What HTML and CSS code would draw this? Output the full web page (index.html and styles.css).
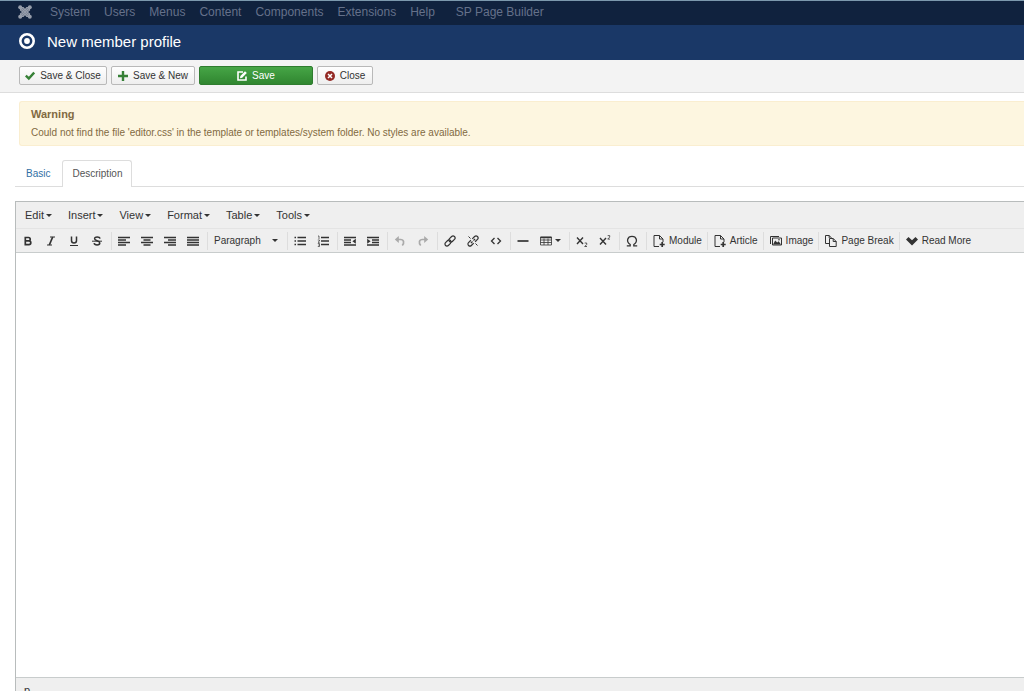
FILE: index.html
```html
<!DOCTYPE html>
<html lang="en">
<head>
<meta charset="utf-8">
<title>New member profile</title>
<link rel="stylesheet" href="styles.css">
</head>
<body>
<div class="page">
<nav class="nav">
  <svg class="brand" viewBox="0 0 14 14"><g fill="none" stroke="#969daa" stroke-width="1.900"><path d="M2.800 2.800 11.200 11.200M11.200 2.800 2.800 11.200"/><path d="M2.600 3v2.200L5 7 2.600 8.800V11M11.400 3v2.200L9 7l2.400 1.800V11M3 2.600h2.200L7 5l1.800-2.400H11M3 11.400h2.200L7 9l1.800 2.400H11" stroke-width="1.400"/></g><g fill="#969daa"><circle cx="2.200" cy="2.200" r="2"/><circle cx="11.800" cy="2.200" r="2"/><circle cx="2.200" cy="11.800" r="2"/><circle cx="11.800" cy="11.800" r="2"/></g></svg>
  <a href="#">System</a><a href="#">Users</a><a href="#">Menus</a><a href="#">Content</a><a href="#">Components</a><a href="#">Extensions</a><a href="#">Help</a><a href="#" class="extra">SP Page Builder</a>
</nav>
<header class="header">
  <svg class="target" viewBox="0 0 16 16"><circle cx="8" cy="8" r="6.700" fill="none" stroke="#fff" stroke-width="2.600"/><circle cx="8" cy="8" r="2.900" fill="#fff"/></svg>
  <h1>New member profile</h1>
</header>
<div class="actions">
  <button class="btn save-close"><svg viewBox="0 0 10 10"><path d="M.8 4.700 3.800 7.500 9.200 1.500" fill="none" stroke="#378137" stroke-width="2.400"/></svg>Save &amp; Close</button>
  <button class="btn save-new"><svg viewBox="0 0 10 10"><path d="M5 0v10M0 5h10" stroke="#378137" stroke-width="2.400"/></svg>Save &amp; New</button>
  <button class="btn primary"><svg viewBox="0 0 10 10"><path d="M6 1H1v8h8V5.500" fill="none" stroke="#fff" stroke-width="1.600"/><path d="M3 7.200 3.400 5 8 .3 9.800 2 5.200 6.700z" fill="#fff"/></svg>Save</button>
  <button class="btn close"><svg viewBox="0 0 10 10"><circle cx="5" cy="5" r="5" fill="#942a25"/><path d="m3 3 4 4M7 3 3 7" stroke="#fff" stroke-width="1.500"/></svg>Close</button>
</div>
<main class="main">
  <section class="alert">
    <h2>Warning</h2>
    <p>Could not find the file 'editor.css' in the template or templates/system folder. No styles are available.</p>
  </section>
  <div class="tabs"><a href="#">Basic</a><a href="#" class="active">Description</a></div>
  <section class="editor">
    <div class="menubar">
      <button>Edit<i class="caret"></i></button><button>Insert<i class="caret"></i></button><button>View<i class="caret"></i></button><button>Format<i class="caret"></i></button><button>Table<i class="caret"></i></button><button>Tools<i class="caret"></i></button>
    </div>
    <div class="toolbar">
      <div class="group">
        <button aria-label="Bold"><svg viewBox="0 0 12 12"><path d="M3.300 2.500h3.200a1.700 1.700 0 0 1 0 3.400H3.300zM3.300 5.900h3.600a1.900 1.900 0 0 1 0 3.800H3.300z" stroke-width="1.700"/></svg></button>
        <button aria-label="Italic"><svg viewBox="0 0 12 12"><path d="M5 2h5M2 10h5" stroke-width="1.100"/><path d="M7.700 2 4.300 10" stroke-width="1.700"/></svg></button>
        <button aria-label="Underline"><svg viewBox="0 0 12 12"><path d="M3.500 1.500v4a2.500 2.500 0 0 0 5 0v-4" stroke-width="1.500"/><path d="M2 10.500h8"/></svg></button>
        <button aria-label="Strikethrough"><svg viewBox="0 0 12 12"><path d="M9 3.600C8.600 1.600 3.600 1.400 3.600 3.800c0 2.300 5.200 1.500 5.200 4.200 0 2.600-5.400 2.400-5.700.2" stroke-width="1.500"/><path d="M1 6.200h10"/></svg></button>
      </div>
      <div class="group">
        <button aria-label="Align left"><svg viewBox="0 0 12 12"><path d="M0 2.500h12M0 5h8M0 7.500h12M0 10h8" stroke-width="1.500"/></svg></button>
        <button aria-label="Align center"><svg viewBox="0 0 12 12"><path d="M0 2.500h12M2.500 5h7M0 7.500h12M2.500 10h7" stroke-width="1.500"/></svg></button>
        <button aria-label="Align right"><svg viewBox="0 0 12 12"><path d="M0 2.500h12M4 5h8M0 7.500h12M4 10h8" stroke-width="1.500"/></svg></button>
        <button aria-label="Justify"><svg viewBox="0 0 12 12"><path d="M0 2.500h12M0 5h12M0 7.500h12M0 10h12" stroke-width="1.500"/></svg></button>
      </div>
      <div class="group"><button class="block-format">Paragraph<i class="caret"></i></button></div>
      <div class="group">
        <button aria-label="Bullet list"><svg viewBox="0 0 12 12"><path d="M.5 2.500H2M.5 6H2M.5 9.500H2M3.500 2.500H12M3.500 6H12M3.500 9.500H12" stroke-width="1.500"/></svg></button>
        <button aria-label="Numbered list"><svg viewBox="0 0 12 12"><path d="M4 2.500h8M4 6h8M4 9.500h8" stroke-width="1.500"/><path d="M1 1h1v3M.8 5h1.700v1L1 7.300h1.700M.8 8.500h1.700v3H.8M1.200 10h1.300" stroke-width=".7"/></svg></button>
      </div>
      <div class="group">
        <button aria-label="Outdent"><svg viewBox="0 0 12 12"><path d="M0 2.500h12M0 5h7M0 7.500h7M0 10h12" stroke-width="1.500"/><path class="solid" d="M11.800 3.800v5L8.400 6.300z"/></svg></button>
        <button aria-label="Indent"><svg viewBox="0 0 12 12"><path d="M0 2.500h12M5 5h7M5 7.500h7M0 10h12" stroke-width="1.500"/><path class="solid" d="M.2 3.800v5l3.400-2.500z"/></svg></button>
      </div>
      <div class="group">
        <button aria-label="Undo" disabled><svg viewBox="0 0 12 12"><path d="M3 4.500h3.500c3.500 0 4 3.500 1.800 6" stroke-width="1.700"/><path class="solid" d="M.8 4.500 4.800 1v7z"/></svg></button>
        <button aria-label="Redo" disabled><svg viewBox="0 0 12 12"><path d="M9 4.500H5.500C2 4.500 1.500 8 3.700 10.500" stroke-width="1.700"/><path class="solid" d="M11.200 4.500 7.200 1v7z"/></svg></button>
      </div>
      <div class="group">
        <button aria-label="Link"><svg viewBox="0 0 12 12"><g transform="rotate(-45 6 6)" stroke-width="1.200"><rect x="-.3" y="4" width="7" height="4" rx="2"/><rect x="5.300" y="4" width="7" height="4" rx="2"/></g></svg></button>
        <button aria-label="Remove link"><svg viewBox="0 0 12 12"><g transform="rotate(-45 6 6)" stroke-width="1.200"><path d="M5 4H1.700a2 2 0 0 0 0 4H5M7 4h3.300a2 2 0 0 1 0 4H7M3 6h2.300M6.700 6H9"/></g><path d="m1.500 1.500 2 2M8.500 8.500l2 2"/></svg></button>
        <button aria-label="Source code"><svg viewBox="0 0 12 12"><path d="M4.500 3 1.500 6l3 3M7.500 3l3 3-3 3" stroke-width="1.300"/></svg></button>
      </div>
      <div class="group">
        <button aria-label="Horizontal line"><svg viewBox="0 0 12 12"><path d="M.5 6h11" stroke-width="1.700"/></svg></button>
        <button class="table-button" aria-label="Table"><svg viewBox="0 0 12 12"><path d="M.5 2h11v8H.5zM.5 5h11M.5 7.500h11M4 3.500V10M8 3.500V10" stroke-width=".8"/><path d="M.5 2.500h11" stroke-width="1.500"/></svg><i class="caret"></i></button>
      </div>
      <div class="group">
        <button aria-label="Subscript"><svg viewBox="0 0 12 12"><path d="m1 2.500 6 6.500M7 2.500 1 9" stroke-width="1.400"/><path d="M8.700 8h2v1.500l-2 2h2.300" stroke-width=".8"/></svg></button>
        <button aria-label="Superscript"><svg viewBox="0 0 12 12"><path d="m1 3 6 6.500M7 3 1 9.500" stroke-width="1.400"/><path d="M8.700.6h2v1.500l-2 2h2.300" stroke-width=".8"/></svg></button>
      </div>
      <div class="group"><button aria-label="Special character"><svg viewBox="0 0 12 12"><path d="M.8 10.800h3.400V9.500C-.3 6.500 1.500 1.300 6 1.300s6.300 5.200 1.800 8.200v1.300h3.400" stroke-width="1.300"/></svg></button></div>
      <div class="group"><button class="labelled"><svg viewBox="0 0 12 12"><path d="M6 11.500H1V.5h5.500L10 4v3M6.500.5V4H10"/><path d="M9.200 7v5M6.700 9.500h5" stroke-width="1.700"/></svg>Module</button></div>
      <div class="group"><button class="labelled"><svg viewBox="0 0 12 12"><path d="M6 11.500H1V.5h5.500L10 4v3M6.500.5V4H10"/><path d="M9.200 7v5M6.700 9.500h5" stroke-width="1.700"/></svg>Article</button></div>
      <div class="group"><button class="labelled"><svg viewBox="0 0 12 12"><path d="M2.500 3h9v7h-9zM.5 9V1.500H9"/><path class="solid" d="m3 9.500 2.200-4 2 2 1.500-1.300L11 9.500z"/><circle class="solid" cx="9" cy="4.800" r=".8"/></svg>Image</button></div>
      <div class="group"><button class="labelled"><svg viewBox="0 0 12 12"><path d="M4 8.500H.5v-8h3.700L6.500 3M4.200.5V3M4.500 3.500h3.700l3 3v5H4.500zM8.200 3.500v3h3"/></svg>Page Break</button></div>
      <div class="group"><button class="labelled"><svg viewBox="0 0 12 12"><path class="solid" d="M0 4.500 2.500 2 6 5.300 9.500 2 12 4.500l-6 6z"/></svg>Read More</button></div>
    </div>
    <div class="content" contenteditable="true" role="textbox" aria-label="Description"></div>
    <div class="status">p</div>
  </section>
</main>
</div>
</body>
</html>
```
FILE: styles.css
```css
* { box-sizing: border-box; }
body { margin: 0; background: #fff; font-family: "Liberation Sans", Arial, sans-serif; font-size: 12px; color: #333; }
.page { height: 100vh; overflow: hidden; }
a { text-decoration: none; }
button { font-family: inherit; color: #333; padding: 0; border: 0; background: none; }
svg { flex: none; }

.nav { display: flex; align-items: center; height: 25px; padding: 0 18px 2px; background: #10223e; border-top: 1px solid #7c99ad; gap: 14px; white-space: nowrap; }
.nav a { color: #65718a; line-height: 20px; }
.nav .extra { margin-left: 7px; }
.brand { width: 14px; height: 14px; margin-right: 4px; }

.header { display: flex; align-items: center; gap: 12px; height: 35px; padding: 0 19px 2px; background: #1a3867; }
.header h1 { margin: 0; color: #fff; font-size: 15px; font-weight: 400; line-height: 20px; }
.target { width: 16px; height: 16px; margin-bottom: 2px; }

.actions { display: flex; align-items: center; gap: 4px; height: 33px; padding: 0 19px 1px; background: #f3f3f3; border-bottom: 1px solid #ddd; }
.btn { display: flex; align-items: center; justify-content: center; gap: 5px; height: 19px; padding-top: 1px; border: 1px solid #b9b9b9; border-radius: 2px; background: linear-gradient(#fff, #eee); font-size: 10px; line-height: 12px; white-space: nowrap; }
.btn svg { width: 10px; height: 10px; }
.save-close { width: 88px; }
.save-new { width: 84px; }
.primary { width: 114px; color: #fff; border-color: #2f7c2f; background: linear-gradient(#46a546, #308630); }
.close { width: 56px; }

.main { padding: 8px 0 0 15px; }
.alert { margin-left: 4px; padding: 5px 11px; height: 45px; background: #fdf6e0; border: 1px solid #faeed0; border-right: 0; border-radius: 3px 0 0 3px; color: #826a42; }
.alert h2 { margin: 0; font-size: 11px; line-height: 14px; }
.alert p { margin: 5px 0 0; font-size: 10px; line-height: 14px; }

.tabs { display: flex; height: 27px; margin-top: 14px; border-bottom: 1px solid #ddd; font-size: 10px; line-height: 26px; }
.tabs a { padding: 1px 12px 0 11px; color: #2f6fa5; }
.tabs .active { height: 27px; padding: 0 9px; border: 1px solid #ddd; border-bottom: 0; border-radius: 3px 3px 0 0; background: #fff; color: #555; }

.editor { margin-top: 14px; border: 1px solid #b8bcbc; border-right: 0; background: #efefef; }
.menubar { display: flex; gap: 16px; height: 27px; padding: 0 9px; border-bottom: 1px solid #e4e4e4; }
.menubar button { display: flex; align-items: center; gap: 2px; font-size: 11px; }
.caret { border: 3px solid transparent; border-top-color: #333; border-bottom: 0; }
.toolbar { display: flex; align-items: center; height: 24px; border-bottom: 1px solid #c8cccc; }
.group { display: flex; padding-right: 3px; border-left: 1px solid #ddd; }
.group:first-child { border-left: 0; }
.group button { display: flex; align-items: center; justify-content: center; width: 23px; height: 18px; font-size: 10px; white-space: nowrap; }
.group svg { width: 12px; height: 12px; fill: none; stroke: #333; stroke-width: 1; }
.group .solid { fill: #333; stroke: none; }
.group button:disabled svg { stroke: #aaa; }
.group button:disabled .solid { fill: #aaa; }
.group .block-format { width: 76px; padding: 0 6px; justify-content: space-between; }
.group .table-button { width: 32px; gap: 3px; }
.group .labelled { width: auto; gap: 4px; padding: 0 2px 0 6px; }
.content { height: 424px; background: #fff; outline: 0; }
.status { border-top: 1px solid #c8cccc; padding: 5px 8px; font-size: 11px; line-height: 14px; }
```
